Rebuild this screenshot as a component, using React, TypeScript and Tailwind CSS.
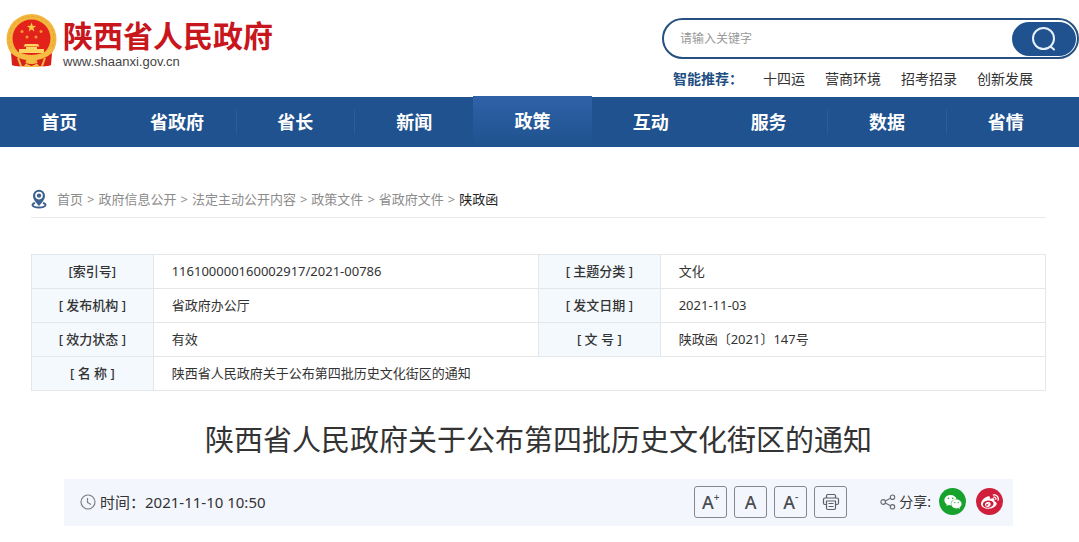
import React from "react";
import clsx from "clsx";
import { FaWeibo, FaWeixin } from "react-icons/fa";

const navItems = ["首页", "省政府", "省长", "新闻", "政策", "互动", "服务", "数据", "省情"];
const activeNav = "政策";
const dividedNav = ["省政府", "省长", "服务", "数据"];

const hotWords = ["十四运", "营商环境", "招考招录", "创新发展"];

const crumbs = ["首页", "政府信息公开", "法定主动公开内容", "政策文件", "省政府文件"];

const docTitle = "陕西省人民政府关于公布第四批历史文化街区的通知";

const Emblem = () => (
  <svg viewBox="0 0 51 55" className="w-[51px] h-[55px] shrink-0" aria-hidden="true">
    <path d="M6 36 L45 36 L45 51 Q36 54 31 50 L25.5 53 L20 50 Q15 54 6 51 Z" fill="#d8201a" />
    <circle cx="25.5" cy="25" r="25" fill="#f3b63c" />
    <circle cx="25.5" cy="25" r="22.5" fill="none" stroke="#e9a233" strokeWidth="1" strokeDasharray="3 2" />
    <circle cx="25.5" cy="24.5" r="19" fill="#e3231b" />
    <path
      d="M25.5 8.5 l1.2 3.3 3.5.1 -2.8 2.1 1 3.4 -2.9-2 -2.9 2 1-3.4 -2.8-2.1 3.5-.1z"
      fill="#f9c846"
    />
    <g fill="#f59a35">
      <circle cx="16" cy="17.5" r="1.5" />
      <circle cx="35" cy="17.5" r="1.5" />
      <circle cx="21" cy="23" r="1.5" />
      <circle cx="30" cy="23" r="1.5" />
    </g>
    <path d="M19 30 h13 l1.5 2.5 h-16z M20 33 h11 v2 h7 v4 h-25 v-4 h7z" fill="#fbd55f" />
    <path d="M5 34 Q25.5 48 46 34 L45 40 Q25.5 51 6 40z" fill="#f6bd44" />
    <path d="M5 39 Q12 45 20 46 L19 52 Q12 53 6 51z M46 39 Q39 45 31 46 L32 52 Q39 53 45 51z" fill="#d8201a" />
    <circle cx="25.5" cy="46" r="4" fill="#f6bd44" />
    <path d="M12 44 l3 8 M39 44 l-3 8" stroke="#f6bd44" strokeWidth="2" />
    <path d="M16 53 l4.500-3 5 2 5-2 4.500 3z" fill="#f6bd44" />
  </svg>
);

const SearchIcon = () => (
  <svg viewBox="0 0 26 26" className="w-[26px] h-[26px]" fill="none" stroke="#e8f1fa" strokeWidth="2" strokeLinecap="round">
    <circle cx="12.500" cy="12.500" r="10.500" />
    <path d="M19.500 20.500 L23 23.500" />
  </svg>
);

const PinIcon = () => (
  <svg viewBox="0 0 16 20" className="w-4 h-5 shrink-0" fill="none" aria-hidden="true">
    <path d="M4 14 C0 15 .5 18.500 8 18.500 C15.500 18.500 16 15 12 14" stroke="#3d628f" strokeWidth="2" />
    <path d="M8 17 C5 13.500 2 10.500 2 6.800 A6 6 0 0 1 14 6.800 C14 10.500 11 13.500 8 17Z" fill="#3d628f" />
    <circle cx="8" cy="6.600" r="3.800" fill="#fff" />
    <circle cx="8" cy="6.600" r="2.200" fill="#3d628f" />
  </svg>
);

const ClockIcon = () => (
  <svg viewBox="0 0 16 16" className="w-4 h-4" fill="none" stroke="#7b7e85" aria-hidden="true">
    <circle cx="8" cy="8" r="7" strokeWidth="1.200" />
    <path d="M7.500 4 V8.500 L11 10.500" strokeWidth="1.200" />
  </svg>
);

const PrintIcon = () => (
  <svg viewBox="0 0 18 18" className="w-[18px] h-[18px]" fill="none" stroke="#5c5f65" strokeWidth="1.200" strokeLinejoin="round">
    <path d="M4.500 5 V3 Q4.500 1.500 6 1.500 H12 Q13.500 1.500 13.500 3 V5" />
    <path d="M4.500 11.500 H3 Q1.500 11.500 1.500 10 V6.500 Q1.500 5 3 5 H15 Q16.500 5 16.500 6.500 V10 Q16.500 11.500 15 11.500 H13.500" />
    <path d="M4.500 8 H13.500 V15 Q13.500 16.500 12 16.500 H6 Q4.500 16.500 4.500 15Z M6.500 10.500 H11.500 M6.500 13.500 H11.500" />
  </svg>
);

const ShareIcon = () => (
  <svg viewBox="0 0 16 16" className="w-4 h-4" fill="none" stroke="#6b6e76" strokeWidth="1.200" aria-hidden="true">
    <circle cx="3.200" cy="8" r="2.300" />
    <circle cx="12.500" cy="3.200" r="2.200" />
    <circle cx="12.500" cy="12.800" r="2.200" />
    <path d="M5.300 7 L10.500 4.300 M5.300 9 L10.500 11.700" />
  </svg>
);

const Label = ({ children }: { children: React.ReactNode }) => (
  <th scope="row" className="border border-[#e3e7ea] bg-[#f4f9fe] pb-[2px] text-center font-medium">
    {children}
  </th>
);

const Value = ({ children, span }: { children: React.ReactNode; span?: number }) => (
  <td colSpan={span} className="border border-[#e3e7ea] pb-[2px] pl-[18px]">
    {children}
  </td>
);

const ToolButton = ({ label, children }: { label: string; children: React.ReactNode }) => (
  <button
    type="button"
    aria-label={label}
    className="flex h-8 w-[33px] items-center justify-center rounded-[3px] border border-[#85878c] text-lg leading-5 font-medium text-[#4a4c50]"
  >
    {children}
  </button>
);

export default function App() {
  return (
    <div className="bg-white pb-4 font-['Noto_Sans','Noto_Sans_CJK_SC',sans-serif] text-[13px] leading-5 text-[#333]">
      <header className="flex items-start justify-between">
        <a href="#" className="flex items-start gap-[6px] pt-[14px] pl-[6px]">
          <Emblem />
          <span className="flex flex-col gap-[2px] pt-[6px]">
            <span className="text-[30px] leading-8 font-bold text-[#c8161d]">陕西省人民政府</span>
            <span className="font-['Liberation_Sans',sans-serif] text-[13px] leading-4 text-[#444]">
              www.shaanxi.gov.cn
            </span>
          </span>
        </a>

        <div className="w-[417px] pt-[18px]">
          <form
            className="flex h-[41px] items-center rounded-full border-2 border-[#25507f] pr-px"
            onSubmit={(e) => e.preventDefault()}
          >
            <input
              type="text"
              aria-label="请输入关键字"
              placeholder="请输入关键字"
              className="min-w-0 flex-1 bg-transparent pl-4 text-xs outline-none placeholder:text-[#999]"
            />
            <button
              type="submit"
              aria-label="搜索"
              className="flex h-[34px] w-16 items-center justify-center rounded-full bg-[#1f528f]"
            >
              <SearchIcon />
            </button>
          </form>
          <div className="flex gap-5 pt-[10px] pb-2 pl-[11px] text-sm leading-5">
            <strong className="font-bold text-[#1f4f82]">智能推荐：</strong>
            {hotWords.map((word) => (
              <a key={word} href="#">
                {word}
              </a>
            ))}
          </div>
        </div>
      </header>

      <nav className="flex h-[50px] bg-[#1f528f] pr-[14px]">
        {navItems.map((item) => (
          <a
            key={item}
            href="#"
            className={clsx(
              "flex flex-1 items-center text-lg leading-6 font-bold text-white",
              item === activeNav && "-mt-px mb-px bg-linear-to-b from-[#2f62a8] to-[#1f528f]"
            )}
          >
            <span
              className={clsx(
                "flex-1 text-center",
                dividedNav.includes(item) && "border-r border-[#2c5d97]"
              )}
            >
              {item}
            </span>
          </a>
        ))}
      </nav>

      <main className="pr-[33px] pl-[31px]">
        <div className="flex items-center gap-[10px] border-b border-[#e6e8ea] pt-[42px] pb-[8px] text-[#8c8c8c]">
          <PinIcon />
          <div className="flex gap-1">
            {crumbs.map((crumb) => (
              <React.Fragment key={crumb}>
                <a href="#">{crumb}</a>
                <span>&gt;</span>
              </React.Fragment>
            ))}
            <a href="#" className="text-[#222]">
              陕政函
            </a>
          </div>
        </div>

        <table className="mt-9 w-full table-fixed border-collapse">
          <colgroup>
            <col className="w-[12%]" />
            <col className="w-[38%]" />
            <col className="w-[12%]" />
            <col className="w-[38%]" />
          </colgroup>
          <tbody>
            <tr className="h-[34px]">
              <Label>[索引号]</Label>
              <Value>116100000160002917/2021-00786</Value>
              <Label>[ 主题分类 ]</Label>
              <Value>文化</Value>
            </tr>
            <tr className="h-[34px]">
              <Label>[ 发布机构 ]</Label>
              <Value>省政府办公厅</Value>
              <Label>[ 发文日期 ]</Label>
              <Value>2021-11-03</Value>
            </tr>
            <tr className="h-[34px]">
              <Label>[ 效力状态 ]</Label>
              <Value>有效</Value>
              <Label>[ 文 号 ]</Label>
              <Value>陕政函〔2021〕147号</Value>
            </tr>
            <tr className="h-[34px]">
              <Label>[ 名 称 ]</Label>
              <Value span={3}>{docTitle}</Value>
            </tr>
          </tbody>
        </table>

        <h1 className="pt-[29px] text-center text-[29px] leading-10">{docTitle}</h1>

        <div className="mx-[33px] mt-[19px] flex h-[47px] items-center bg-[#f3f6fd] pr-[10px] pb-[2px] pl-4">
          <div className="flex items-center gap-1 text-[15px] leading-6">
            <ClockIcon />
            <span>时间：2021-11-10 10:50</span>
          </div>
          <div className="ml-auto flex gap-[7px]">
            <ToolButton label="放大字体">
              A<sup className="text-[10px]">+</sup>
            </ToolButton>
            <ToolButton label="默认字体">A</ToolButton>
            <ToolButton label="缩小字体">
              A<sup className="text-[10px]">-</sup>
            </ToolButton>
            <ToolButton label="打印">
              <PrintIcon />
            </ToolButton>
          </div>
          <div className="ml-[33px] flex items-center">
            <ShareIcon />
            <span className="ml-[3px] text-sm">分享:</span>
            <a
              href="#"
              aria-label="微信"
              className="ml-2 flex h-[27px] w-[27px] items-center justify-center rounded-full bg-[#16a22c] text-white"
            >
              <FaWeixin size={18} />
            </a>
            <a
              href="#"
              aria-label="微博"
              className="ml-[10px] flex h-[27px] w-[27px] items-center justify-center rounded-full bg-[#cf1f3c] text-white"
            >
              <FaWeibo size={18} />
            </a>
          </div>
        </div>
      </main>
    </div>
  );
}
